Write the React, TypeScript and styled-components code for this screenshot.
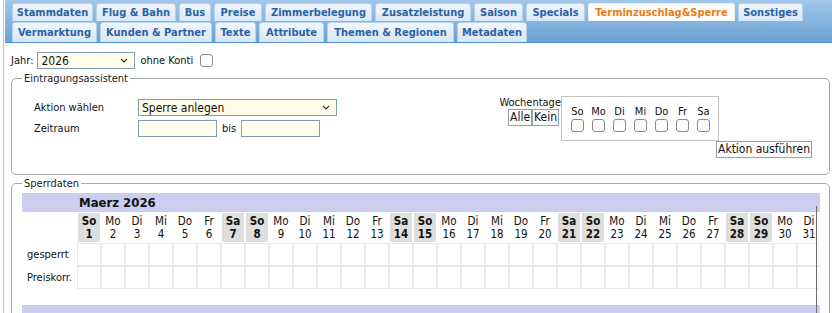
import React from 'react';
import styled, { createGlobalStyle } from 'styled-components';

const GlobalStyle = createGlobalStyle`
  html, body { margin: 0; padding: 0; background: #fff; }
  body {
    font-family: "DejaVu Sans Condensed", "Liberation Sans", sans-serif;
    font-size: 11px;
    color: #111;
    overflow: hidden;
  }
`;

const Page = styled.div`
  padding-left: 3px;
  height: 313px;
  overflow: hidden;
`;

const Frame = styled.div`
  border-left: 1px solid #a6c8e8;
  min-height: 313px;
`;

const TabBar = styled.div`
  margin-left: 1px;
  height: 43px;
  box-sizing: border-box;
  padding: 3px 0 0 7px;
  background: linear-gradient(#a2c7e9, #6aa2d3);
  border-bottom: 1px solid #4d92d6;
  display: flex;
  flex-direction: column;
  gap: 1px;
`;

const TabRow = styled.div<{ $h: number }>`
  display: flex;
  gap: 3px;
  height: ${(p) => p.$h}px;
`;

const Tab = styled.div<{ $active?: boolean; $w: number }>`
  width: ${(p) => p.$w}px;
  box-sizing: border-box;
  display: flex;
  align-items: center;
  justify-content: center;
  font-weight: bold;
  font-size: 11px;
  color: ${(p) => (p.$active ? '#f07a10' : '#2c62a3')};
  background: ${(p) => (p.$active ? '#fff' : 'linear-gradient(#f0f6fc, #d8e7f6)')};
  border: 1px solid ${(p) => (p.$active ? '#e8f0f8' : '#b6d1ea')};
  border-bottom: none;
  border-radius: 3px 3px 0 0;
  white-space: nowrap;
`;

const Form = styled.div`
  padding: 9px 2px 0 7px;
`;

const InlineRow = styled.div`
  display: flex;
  align-items: center;
  gap: 4px;
  height: 17px;
`;

const Text = styled.span<{ $ml?: number }>`
  margin-left: ${(p) => p.$ml ?? 0}px;
  white-space: nowrap;
`;

const SelectBox = styled.div<{ $w: number }>`
  width: ${(p) => p.$w}px;
  height: 17px;
  box-sizing: border-box;
  border: 1px solid #7f9db9;
  background: #fffde9;
  display: flex;
  align-items: center;
  justify-content: space-between;
  padding: 0 6px 0 3px;
  font-size: 12px;
`;

const TextInput = styled.div<{ $w: number }>`
  width: ${(p) => p.$w}px;
  height: 17px;
  box-sizing: border-box;
  border: 1px solid #7f9db9;
  background: #fffde9;
`;

const Check = styled.span`
  display: inline-block;
  width: 13px;
  height: 13px;
  box-sizing: border-box;
  border: 1px solid #8a8a8a;
  border-radius: 3px;
  background: linear-gradient(#fafafa, #fff);
`;

const Fieldset = styled.fieldset<{ $mt: number }>`
  margin: ${(p) => p.$mt}px 0 0 0;
  border: 1px solid #a8a8a8;
  border-radius: 5px;
  min-width: 0;
  padding: 0;
`;

const Legend = styled.legend`
  margin-left: 10px;
  padding: 0 2px;
  font-size: 11px;
  color: #222;
`;

const AssistantBody = styled.div`
  display: flex;
  align-items: flex-start;
  padding: 11px 10px 16px 22px;
`;

const LeftGrid = styled.div`
  display: grid;
  grid-template-columns: 104px auto;
  row-gap: 4px;
  align-items: center;
  width: 467px;
  margin-top: 3px;
`;

const FieldRow = styled.div`
  display: flex;
  align-items: center;
`;

const WeekBlock = styled.div`
  display: flex;
  flex-direction: column;
`;

const WeekTop = styled.div`
  display: flex;
  align-items: flex-start;
`;

const WeekLabelCol = styled.div`
  width: 60px;
  display: flex;
  flex-direction: column;
  align-items: flex-end;
`;

const ButtonRow = styled.div`
  display: flex;
  margin-right: 2px;
`;

const Btn = styled.div<{ $ml?: number }>`
  margin-left: ${(p) => p.$ml ?? 0}px;
  height: 17px;
  box-sizing: border-box;
  border: 1px solid #8aa3bd;
  background: #fff;
  padding: 0 1px;
  font-size: 12px;
  line-height: 15px;
  white-space: nowrap;
  align-self: flex-start;
`;

const DaysBox = styled.div`
  border: 1px solid #c2c2c2;
  padding: 8px 8px 8px 9px;
  display: grid;
  grid-template-columns: repeat(7, 13px);
  column-gap: 8px;
  row-gap: 1px;
`;

const DayLabel = styled.span`
  display: flex;
  justify-content: center;
  width: 13px;
  line-height: 13px;
`;

const CalendarView = styled.div`
  position: relative;
  overflow: hidden;
  margin: 3px 9px 0 10px;
`;

const MonthBand = styled.div`
  background: #cdcdef;
  height: 19px;
  padding-left: 57px;
  font-weight: bold;
  font-size: 13px;
  line-height: 20px;
`;

const CalRow = styled.div`
  display: flex;
`;

const RowLabel = styled.div<{ $h: number }>`
  width: 55px;
  flex: none;
  height: ${(p) => p.$h}px;
  box-sizing: border-box;
  padding-left: 5px;
  display: flex;
  align-items: center;
`;

const DayHead = styled.div<{ $we: boolean }>`
  width: 24px;
  flex: none;
  height: 31px;
  box-sizing: border-box;
  border: 1px solid #fff;
  background: ${(p) => (p.$we ? '#dedede' : '#fff')};
  font-weight: ${(p) => (p.$we ? 'bold' : 'normal')};
  text-align: center;
  line-height: 13px;
  padding-top: 2px;
  font-size: 11.5px;
`;

const Cell = styled.div`
  width: 24px;
  flex: none;
  height: 23px;
  box-sizing: border-box;
  border: 1px solid #e9e9e9;
`;

const Spacer = styled.div`
  height: 16px;
`;

const ScrollEdge = styled.div`
  position: absolute;
  right: 3px;
  top: 13px;
  bottom: 0;
  width: 1px;
  background: #6c6c6c;
`;

const Chevron = () => (
  <svg width="8" height="5" viewBox="0 0 8 5">
    <path d="M1 1 L4 4 L7 1" fill="none" stroke="#333" strokeWidth="1.2" />
  </svg>
);

const row1: [string, number][] = [
  ['Stammdaten', 81],
  ['Flug & Bahn', 80],
  ['Bus', 32],
  ['Preise', 48],
  ['Zimmerbelegung', 107],
  ['Zusatzleistung', 96],
  ['Saison', 49],
  ['Specials', 59],
  ['Terminzuschlag&Sperre', 147],
  ['Sonstiges', 65],
];
const row2: [string, number][] = [
  ['Vermarktung', 85],
  ['Kunden & Partner', 112],
  ['Texte', 41],
  ['Attribute', 65],
  ['Themen & Regionen', 127],
  ['Metadaten', 70],
];
const weekNames = ['So', 'Mo', 'Di', 'Mi', 'Do', 'Fr', 'Sa'];
const days = Array.from({ length: 31 }, (_, i) => ({ n: i + 1, w: weekNames[i % 7], we: i % 7 === 0 || i % 7 === 6 }));

export default function App() {
  return (
    <Page>
      <GlobalStyle />
      <Frame>
        <TabBar>
          <TabRow $h={18}>
            {row1.map(([t, w]) => (
              <Tab key={t} $w={w} $active={t === 'Terminzuschlag&Sperre'}>{t}</Tab>
            ))}
          </TabRow>
          <TabRow $h={20}>
            {row2.map(([t, w]) => (
              <Tab key={t} $w={w}>{t}</Tab>
            ))}
          </TabRow>
        </TabBar>
        <Form>
          <InlineRow>
            <Text>Jahr:</Text>
            <SelectBox $w={98}>
              <span>2026</span>
              <Chevron />
            </SelectBox>
            <Text $ml={1}>ohne Konti</Text>
            <Check style={{ marginLeft: 3 }} />
          </InlineRow>
          <Fieldset $mt={3}>
            <Legend>Eintragungsassistent</Legend>
            <AssistantBody>
              <LeftGrid>
                <Text>Aktion wählen</Text>
                <SelectBox $w={199}>
                  <span>Sperre anlegen</span>
                  <Chevron />
                </SelectBox>
                <Text>Zeitraum</Text>
                <FieldRow>
                  <TextInput $w={79} />
                  <Text $ml={5}>bis</Text>
                  <TextInput $w={79} style={{ marginLeft: 5 }} />
                </FieldRow>
              </LeftGrid>
              <WeekBlock>
                <WeekTop>
                  <WeekLabelCol>
                    <Text>Wochentage</Text>
                    <ButtonRow>
                      <Btn>Alle</Btn>
                      <Btn>Kein</Btn>
                    </ButtonRow>
                  </WeekLabelCol>
                  <DaysBox>
                    {weekNames.map((d) => (
                      <DayLabel key={d}>{d}</DayLabel>
                    ))}
                    {weekNames.map((d) => (
                      <Check key={'c' + d} />
                    ))}
                  </DaysBox>
                </WeekTop>
                <Btn $ml={215}>Aktion ausführen</Btn>
              </WeekBlock>
            </AssistantBody>
          </Fieldset>
          <Fieldset $mt={2}>
            <Legend>Sperrdaten</Legend>
            <CalendarView>
              <MonthBand>Maerz 2026</MonthBand>
              <CalRow>
                <RowLabel $h={31} />
                {days.map((d) => (
                  <DayHead key={d.n} $we={d.we}>
                    {d.w}
                    <br />
                    {d.n}
                  </DayHead>
                ))}
              </CalRow>
              <CalRow>
                <RowLabel $h={23}>gesperrt</RowLabel>
                {days.map((d) => (
                  <Cell key={d.n} />
                ))}
              </CalRow>
              <CalRow>
                <RowLabel $h={23}>Preiskorr.</RowLabel>
                {days.map((d) => (
                  <Cell key={d.n} />
                ))}
              </CalRow>
              <Spacer />
              <MonthBand />
              <Spacer />
              <ScrollEdge />
            </CalendarView>
          </Fieldset>
        </Form>
      </Frame>
    </Page>
  );
}
